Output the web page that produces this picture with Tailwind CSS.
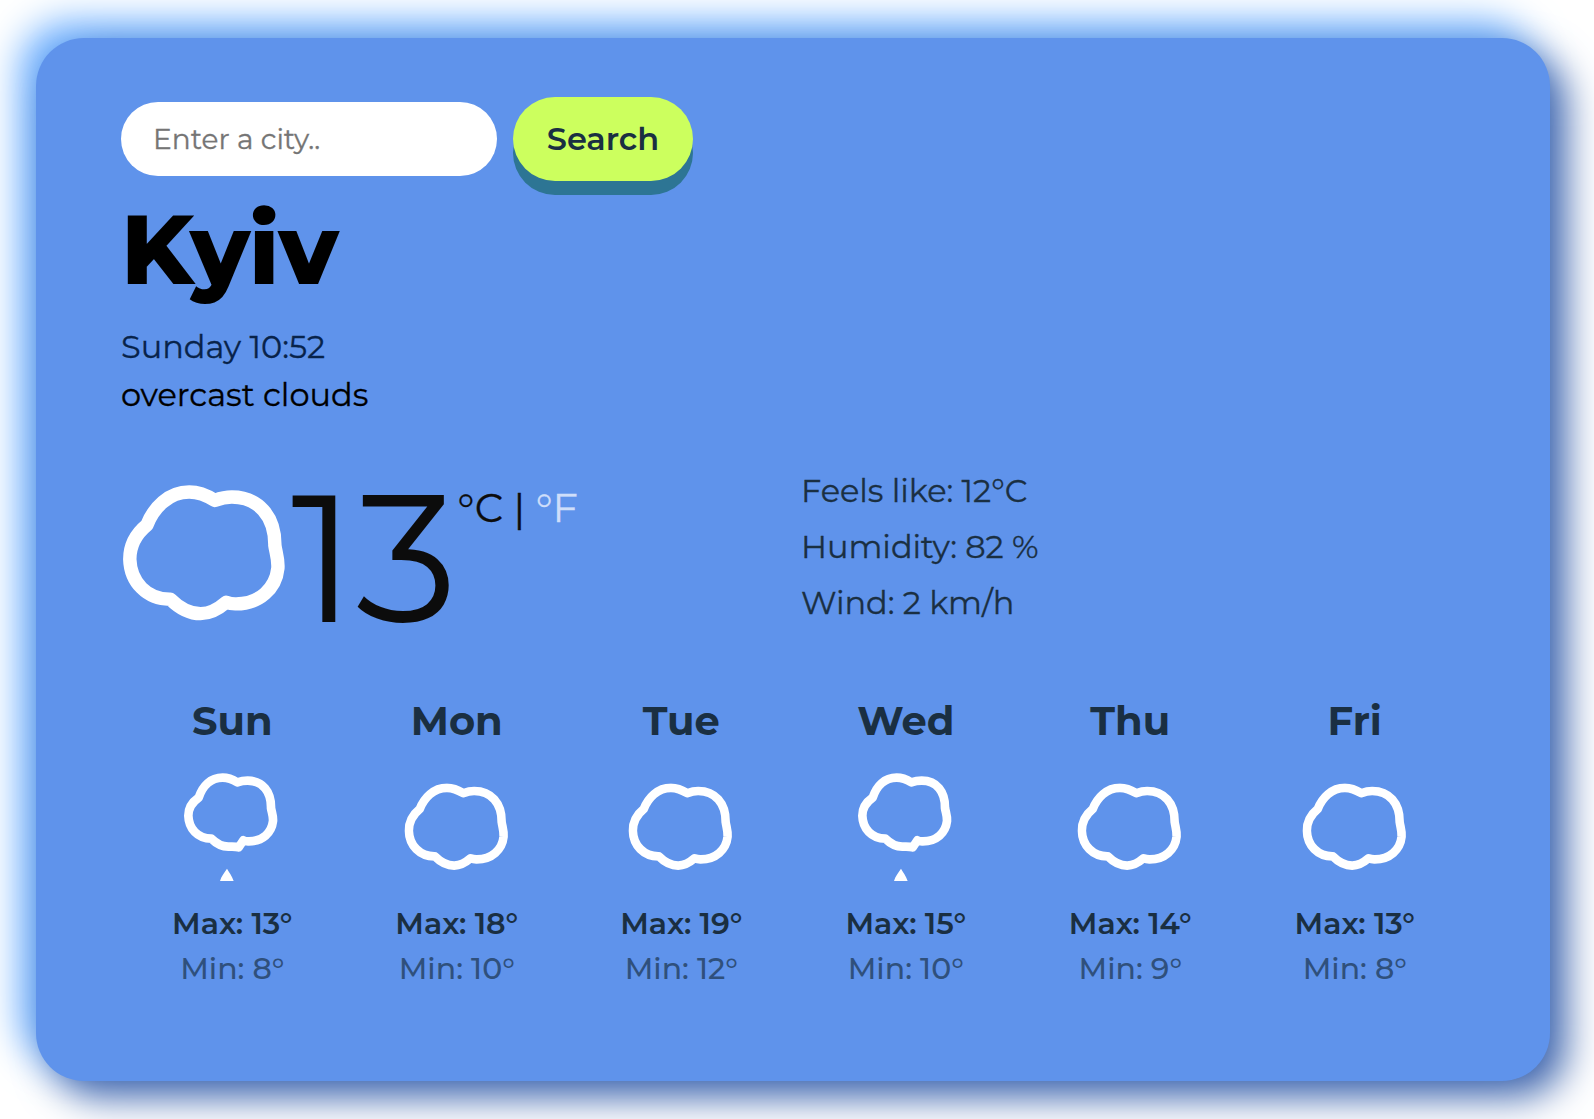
<!DOCTYPE html>
<html lang="en">
<head>
<meta charset="utf-8">
<title>Weather</title>
<script src="https://cdn.jsdelivr.net/npm/@tailwindcss/browser@4"></script>
</head>
<body class="h-[1119px] overflow-hidden bg-white pt-[38px] pl-9 font-[Montserrat,Inter,sans-serif] text-[#1a2f42]">
<svg class="hidden">
  <symbol id="cloud" viewBox="0 0 482 405">
    <path fill="none" stroke="#fff" stroke-width="40" stroke-linejoin="round" d="M71 119C91 68 135 21 197 21C228 21 251 32 273 46C295 38 309 36 324 36C402 36 453 92 452 180C455 202 463 220 461 248C455 308 406 355 334 354C322 354 315 352 307 349C284 369 261 383 231 383C196 383 168 367 141 340C71 341 22 289 20 221C20 180 38 146 71 119Z"/>
  </symbol>
  <symbol id="clouds" viewBox="0 0 384 384">
    <use href="#cloud" x="34" y="91" width="312" height="261"/>
  </symbol>
  <symbol id="rain" viewBox="0 0 384 384">
    <path fill="none" stroke="#fff" stroke-width="26" stroke-linejoin="round" d="M92 134C104 98 128 74 164 74C183 74 195 80 208 88C220 84 228 83 239 83C284 83 310 116 309 165C311 178 316 188 315 204C311 239 284 266 240 265C234 265 230 264 226 262L212 283C202 280 194 281 181 281C159 281 146 273 130 257C89 257 62 227 61 188C61 163 72 148 92 134Z"/>
    <path fill="#fff" d="M177 347C183 358 192 368 197 384H156C160 368 170 359 177 347Z"/>
  </symbol>
</svg>
<main class="h-[1043px] w-[1514px] rounded-[48px] bg-[#5f93eb] pt-[59px] pl-[85px] shadow-[16px_16px_38px_#3f65ad,-16px_-16px_38px_#6db0ff]">
  <form class="flex items-center">
    <input type="text" placeholder="Enter a city.." class="h-[74px] w-[376px] rounded-full bg-white px-8 text-[28px] placeholder:text-[#757575] [-webkit-text-stroke:0.3px]">
    <button type="button" class="ml-4 h-[84px] w-[180px] rounded-full bg-[#ccff5e] text-[32px] font-semibold shadow-[0_14px_0_#2d7594]">Search</button>
  </form>
  <h1 class="mt-[11px] text-[97px] leading-[114px] font-extrabold tracking-[-1px] text-black"><span class="tracking-[-4px]">K</span>yiv</h1>
  <p class="mt-[17px] text-[32px] leading-[48px] text-[#08234a] [-webkit-text-stroke:0.3px]">Sunday 10:52</p>
  <p class="text-[32px] leading-[48px] text-black [-webkit-text-stroke:0.3px]">overcast clouds</p>
  <section class="mt-[39px] flex h-[200px] text-[#0c0c0c]">
    <svg class="mt-[27px] ml-[2px] h-[136px] w-[162px] shrink-0"><use href="#cloud"/></svg>
    <div class="flex w-[516px] shrink-0 pl-[6px]">
      <strong class="text-[180px] leading-[200px] font-normal">13</strong>
      <span class="pt-[26px] text-[40px] leading-[48px] [-webkit-text-stroke:0.3px]">°C | <a class="text-[#cfdefa]">°F</a></span>
    </div>
    <ul class="pt-[5px] text-[32px] leading-[56px] tracking-[-0.05px] text-[#1a2f42] [-webkit-text-stroke:0.3px]">
      <li>Feels like: 12°C</li>
      <li>Humidity: 82 %</li>
      <li>Wind: 2 km/h</li>
    </ul>
  </section>
  <section class="-ml-px mt-[39px] grid w-[1347px] grid-cols-6 text-center text-[30px] leading-[45px]">
    <div class="flex flex-col items-center"><h2 class="text-[40px] leading-[48px] font-bold">Sun</h2><svg class="mt-2 mb-5 size-32"><use href="#rain"/></svg><p class="font-semibold">Max: 13°</p><p class="font-medium text-[#2f507c]">Min: 8°</p></div>
    <div class="flex flex-col items-center"><h2 class="text-[40px] leading-[48px] font-bold">Mon</h2><svg class="mt-2 mb-5 size-32"><use href="#clouds"/></svg><p class="font-semibold">Max: 18°</p><p class="font-medium text-[#2f507c]">Min: 10°</p></div>
    <div class="flex flex-col items-center"><h2 class="text-[40px] leading-[48px] font-bold">Tue</h2><svg class="mt-2 mb-5 size-32"><use href="#clouds"/></svg><p class="font-semibold">Max: 19°</p><p class="font-medium text-[#2f507c]">Min: 12°</p></div>
    <div class="flex flex-col items-center"><h2 class="text-[40px] leading-[48px] font-bold">Wed</h2><svg class="mt-2 mb-5 size-32"><use href="#rain"/></svg><p class="font-semibold">Max: 15°</p><p class="font-medium text-[#2f507c]">Min: 10°</p></div>
    <div class="flex flex-col items-center"><h2 class="text-[40px] leading-[48px] font-bold">Thu</h2><svg class="mt-2 mb-5 size-32"><use href="#clouds"/></svg><p class="font-semibold">Max: 14°</p><p class="font-medium text-[#2f507c]">Min: 9°</p></div>
    <div class="flex flex-col items-center"><h2 class="text-[40px] leading-[48px] font-bold">Fri</h2><svg class="mt-2 mb-5 size-32"><use href="#clouds"/></svg><p class="font-semibold">Max: 13°</p><p class="font-medium text-[#2f507c]">Min: 8°</p></div>
  </section>
</main>
</body>
</html>
